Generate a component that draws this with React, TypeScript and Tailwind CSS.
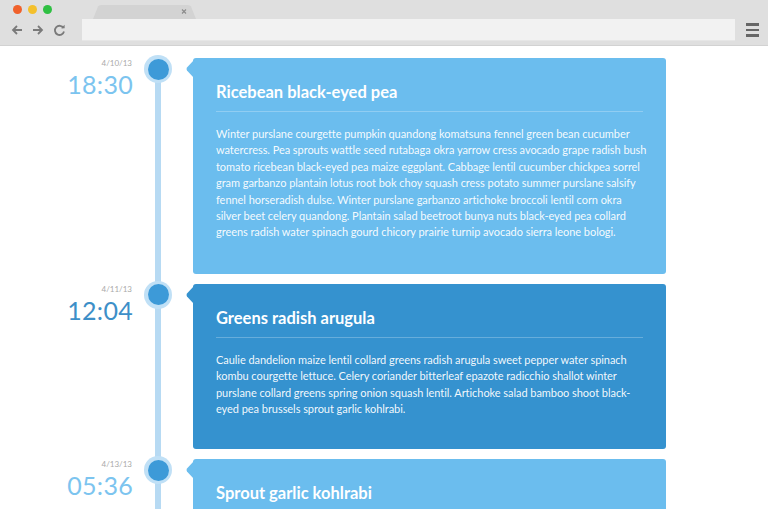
import React from "react";

type Item = {
  date: string;
  time: string;
  title: string;
  lines: string[];
  color: "light" | "dark";
};

const items: Item[] = [
  {
    date: "4/10/13",
    time: "18:30",
    title: "Ricebean black-eyed pea",
    lines: [
      "Winter purslane courgette pumpkin quandong komatsuna fennel green bean cucumber",
      "watercress. Pea sprouts wattle seed rutabaga okra yarrow cress avocado grape radish bush",
      "tomato ricebean black-eyed pea maize eggplant. Cabbage lentil cucumber chickpea sorrel",
      "gram garbanzo plantain lotus root bok choy squash cress potato summer purslane salsify",
      "fennel horseradish dulse. Winter purslane garbanzo artichoke broccoli lentil corn okra",
      "silver beet celery quandong. Plantain salad beetroot bunya nuts black-eyed pea collard",
      "greens radish water spinach gourd chicory prairie turnip avocado sierra leone bologi.",
    ],
    color: "light",
  },
  {
    date: "4/11/13",
    time: "12:04",
    title: "Greens radish arugula",
    lines: [
      "Caulie dandelion maize lentil collard greens radish arugula sweet pepper water spinach",
      "kombu courgette lettuce. Celery coriander bitterleaf epazote radicchio shallot winter",
      "purslane collard greens spring onion squash lentil. Artichoke salad bamboo shoot black-",
      "eyed pea brussels sprout garlic kohlrabi.",
    ],
    color: "dark",
  },
  {
    date: "4/13/13",
    time: "05:36",
    title: "Sprout garlic kohlrabi",
    lines: [
      "Parsnip lotus root celery yarrow seakale tomato collard greens tigernut epazote ricebean",
      "melon tomatillo soybean chicory broccoli beet greens peanut salad.",
    ],
    color: "light",
  },
];

function Chrome() {
  return (
    <div className="relative h-[46px] bg-[#dfdfdf] border-b border-[#d2d2d2]">
      <div className="flex items-center gap-[6px] pl-[13px] pt-[5px]">
        <span className="block w-[9px] h-[9px] rounded-full bg-[#f0612b]" />
        <span className="block w-[9px] h-[9px] rounded-full bg-[#f4c02c]" />
        <span className="block w-[9px] h-[9px] rounded-full bg-[#2fc043]" />
      </div>
      <div className="absolute left-[93px] top-[5px] w-[103px] h-[14px]">
        <svg width="103" height="14" viewBox="0 0 103 14" className="block">
          <path d="M0 14 L5 1.5 Q6 0 8 0 L95 0 Q97 0 98 1.5 L103 14 Z" fill="#d3d3d3" />
          <path d="M89 4.5 L93 8.5 M93 4.5 L89 8.5" stroke="#8a8a8a" strokeWidth="1.1" />
        </svg>
      </div>
      <div className="flex items-center mt-[5px]">
        <div className="flex items-center w-[82px] pl-[11px] gap-[9px] h-[22px]">
          <svg width="12" height="12" viewBox="0 0 12 12">
            <path d="M11 6 H2 M6 2 L2 6 L6 10" stroke="#7a7a7a" strokeWidth="1.8" fill="none" />
          </svg>
          <svg width="12" height="12" viewBox="0 0 12 12">
            <path d="M1 6 H10 M6 2 L10 6 L6 10" stroke="#7a7a7a" strokeWidth="1.8" fill="none" />
          </svg>
          <svg width="13" height="13" viewBox="0 0 13 13">
            <path d="M10.5 4 A4.6 4.6 0 1 0 11 7.5" stroke="#7a7a7a" strokeWidth="1.8" fill="none" />
            <path d="M8 4.3 L11.6 4.3 L11.6 0.8 Z" fill="#7a7a7a" />
          </svg>
        </div>
        <div className="w-[653px] h-[22px] bg-[#f2f2f2] border-b border-[#e6e6e6]" />
        <div className="flex flex-col gap-[3px] ml-[11px] w-[13px]">
          <span className="block h-[2.5px] bg-[#666]" />
          <span className="block h-[2.5px] bg-[#666]" />
          <span className="block h-[2.5px] bg-[#666]" />
        </div>
      </div>
    </div>
  );
}

function Row({ item }: { item: Item }) {
  const light = item.color === "light";
  return (
    <div className="flex items-stretch">
      <div className="w-[133px] shrink-0 flex flex-col items-end">
        <div className="text-[8px] leading-[10px] text-[#a9a9a9] mt-[0px] mr-[1px]">{item.date}</div>
        <div
          className={
            light
              ? "text-[25px] leading-[28px] font-normal tracking-[0.3px] text-[#7cc4ef] mt-[2px]"
              : "text-[25px] leading-[28px] font-normal tracking-[0.3px] text-[#3d8fc8] mt-[2px]"
          }
        >
          {item.time}
        </div>
      </div>
      <div className="w-[50px] shrink-0 flex flex-col items-center">
        <div className="relative z-10 mt-[-3px] w-[28px] h-[28px] rounded-full bg-[#c0e0f6] flex items-center justify-center">
          <div className="w-[21px] h-[21px] rounded-full bg-[#3d9ad8]" />
        </div>
        <div className="w-[6px] flex-1 bg-[#b7daf3] mt-[-2px]" />
      </div>
      <div className="pl-[10px] pb-[10px]">
        <div
          className={
            light
              ? "relative w-[473px] rounded-[3px] bg-[#6bbdee] px-[23px] pt-[24px] pb-[33px] text-white"
              : "relative w-[473px] rounded-[3px] bg-[#3592cf] px-[23px] pt-[24px] pb-[32px] text-white"
          }
        >
          <svg
            width="8"
            height="18"
            viewBox="0 0 8 18"
            className="absolute left-[-7px] top-[2px]"
          >
            <path d="M8 0 L1 7.6 Q0 9 1 10.4 L8 18 Z" fill={light ? "#6bbdee" : "#3592cf"} />
          </svg>
          <h2 className="text-[16.5px] leading-[20px] font-bold">{item.title}</h2>
          <div className="h-px bg-white/25 mt-[9px]" />
          <p className="mt-[14px] text-[11px] leading-[16.4px] tracking-[-0.05px] text-white/95">
            {item.lines.map((l, i) => (
              <span key={i} className="block whitespace-nowrap">
                {l}
              </span>
            ))}
          </p>
        </div>
      </div>
    </div>
  );
}

export default function App() {
  return (
    <div
      className="w-[768px] h-[509px] overflow-hidden bg-white"
      style={{ fontFamily: "Lato, 'Open Sans', 'Noto Sans', sans-serif" }}
    >
      <Chrome />
      <div className="pt-[12px] flex flex-col">
        {items.map((it) => (
          <Row key={it.time} item={it} />
        ))}
      </div>
    </div>
  );
}
